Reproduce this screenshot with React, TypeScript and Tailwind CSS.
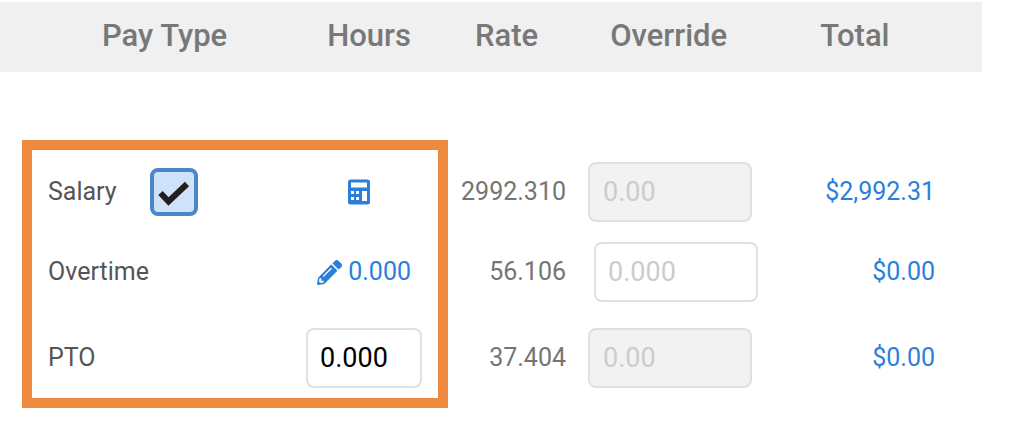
import { FaPencilAlt } from 'react-icons/fa'

const CalculatorIcon = () => (
  <svg width="24" height="26" viewBox="0 0 24 26" className="text-[#2b7fdc]">
    <rect x="1" y="0.5" width="22" height="25" rx="2.5" fill="currentColor" />
    <rect x="4" y="3.5" width="16" height="5" fill="#fff" />
    <rect x="4" y="12" width="3" height="3" fill="#fff" />
    <rect x="9" y="12" width="3" height="3" fill="#fff" />
    <rect x="4" y="18" width="3" height="3" fill="#fff" />
    <rect x="9" y="18" width="3" height="3" fill="#fff" />
    <rect x="15" y="12" width="5" height="10" fill="#fff" />
  </svg>
)

const CheckIcon = () => (
  <svg width="34" height="28" viewBox="0 0 34 28" className="shrink-0">
    <path d="M3.5 15 L11.5 23.5 L30 6" fill="none" stroke="#231f20" strokeWidth="6" />
  </svg>
)

const Row = ({ className, children }: { className: string; children: React.ReactNode }) => (
  <div className={`flex h-[60px] items-center ${className}`}>{children}</div>
)

const OverrideInput = ({ value, disabled, className }: { value: string; disabled?: boolean; className: string }) => (
  <div
    className={`flex h-[60px] w-[164px] items-center rounded-lg border-2 border-[#e0e0e0] text-[27px] text-[#cccccc] ${
      disabled ? 'bg-[#f2f2f2] pl-[13px]' : 'bg-white pl-[12px]'
    } ${className}`}
  >
    {value}
  </div>
)

const App = () => {
  return (
    <div className="h-[424px] w-[1012px] overflow-hidden bg-white pt-[2px] font-['Roboto',sans-serif] text-[25px] text-[#757575]">
      <div className="flex h-[70px] w-[982px] items-center bg-[#f0f0f0] pb-[2px] pl-[102px] text-[31px] font-medium text-[#787878]">
        <span>Pay Type</span>
        <span className="ml-[100px]">Hours</span>
        <span className="ml-[64px]">Rate</span>
        <span className="ml-[72px]">Override</span>
        <span className="ml-[93px]">Total</span>
      </div>

      <div className="mt-[68px] ml-[22px] flex">
        <div className="h-[268px] w-[426px] border-[10px] border-[#ee8a3e] pt-[12px] pr-[16px] pl-[16px] text-[#555555]">
          <Row className="">
            <span className="w-[102px]">Salary</span>
            <div className="flex h-[48px] w-[48px] items-center justify-center rounded-lg border-4 border-[#4a87c8] bg-[#cfe2fa]">
              <CheckIcon />
            </div>
            <div className="ml-auto flex w-[116px] justify-center pr-[10px]">
              <CalculatorIcon />
            </div>
          </Row>
          <Row className="mt-5 justify-between">
            <span>Overtime</span>
            <div className="flex items-center gap-[6px] pr-[11px] text-[#2b7fdc]">
              <FaPencilAlt className="text-[25px]" />
              <span>0.000</span>
            </div>
          </Row>
          <Row className="mt-[26px] justify-between">
            <span>PTO</span>
            <div className="flex h-[60px] w-[116px] items-center rounded-lg border-2 border-[#e0e0e0] bg-white pl-[12px] text-[27px] text-black">
              0.000
            </div>
          </Row>
        </div>

        <div className="w-[487px] pt-[22px]">
          <Row className="">
            <span className="w-[118px] text-right">2992.310</span>
            <OverrideInput value="0.00" disabled className="ml-[22px]" />
            <span className="flex-1 text-right text-[#2b7fdc]">$2,992.31</span>
          </Row>
          <Row className="mt-5">
            <span className="w-[118px] text-right">56.106</span>
            <OverrideInput value="0.000" className="ml-[28px]" />
            <span className="flex-1 text-right text-[#2b7fdc]">$0.00</span>
          </Row>
          <Row className="mt-[26px]">
            <span className="w-[118px] text-right">37.404</span>
            <OverrideInput value="0.00" disabled className="ml-[22px]" />
            <span className="flex-1 text-right text-[#2b7fdc]">$0.00</span>
          </Row>
        </div>
      </div>
    </div>
  )
}

export default App
